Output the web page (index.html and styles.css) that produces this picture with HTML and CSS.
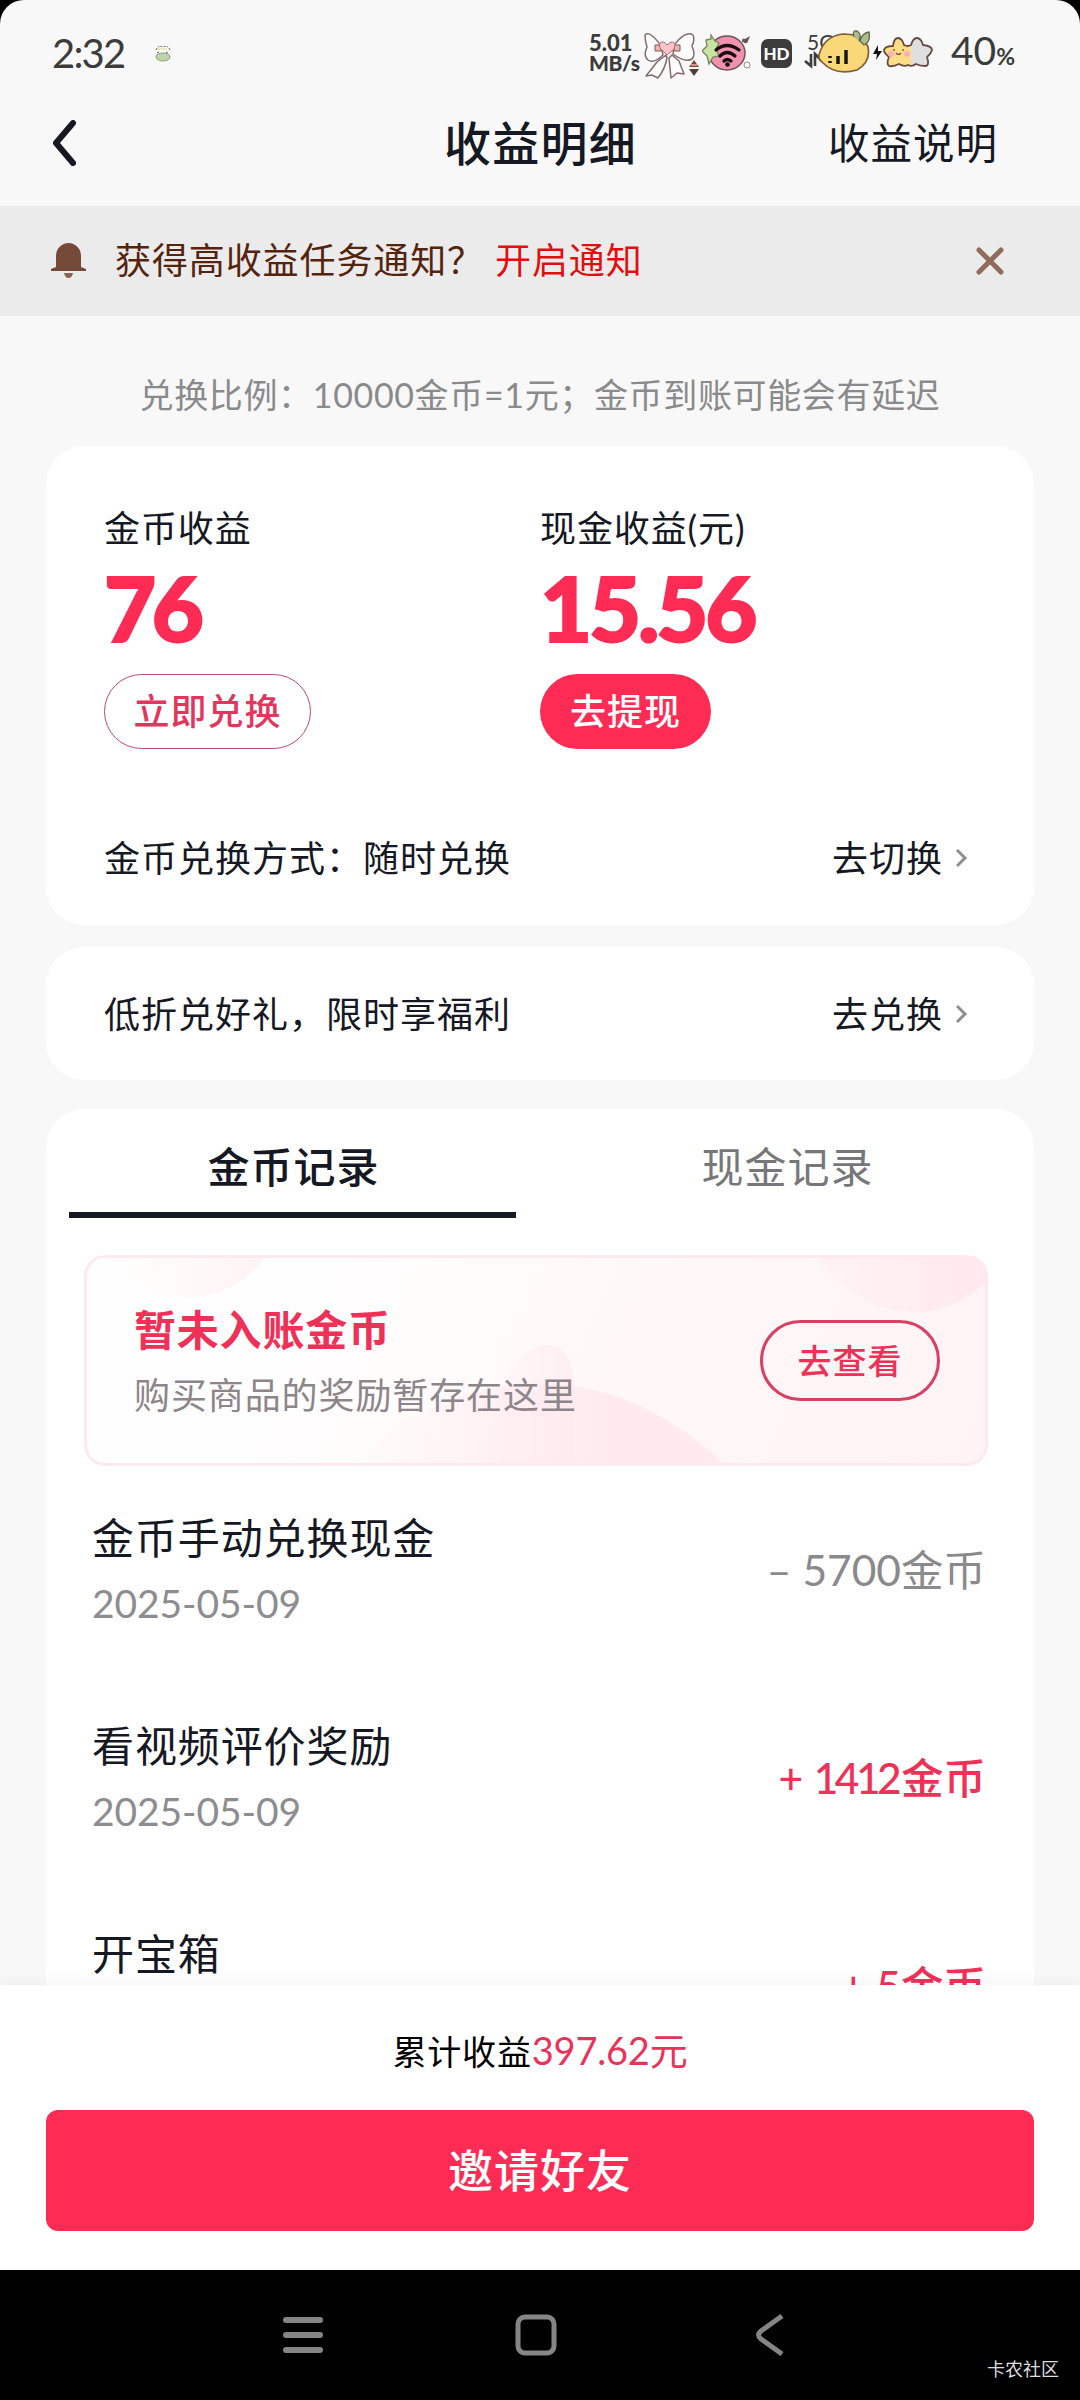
FILE: index.html
```html
<!DOCTYPE html>
<html lang="zh-CN">
<head>
<meta charset="utf-8">
<title>收益明细</title>
<link rel="stylesheet" href="styles.css">
</head>
<body>
<div class="phone">
  <div class="status">
    <span class="time">2:32</span>
    <svg class="frog" width="16" height="18" viewBox="0 0 16 18"><path d="M1 6Q3 1 8 3Q13 1 15 6" fill="#fff" stroke="#666c60" stroke-width="1" stroke-dasharray="2 1"/><path d="M3 5h9" stroke="#d5d982"/><ellipse cx="8" cy="13" rx="7" ry="4" fill="#bdd5a8" stroke="#78906b" stroke-width=".8"/><path d="M2 9l2-1M11 8l2 1" stroke="#57634f"/></svg>
    <span class="speed"><span>5.01</span><span class="unit">MB/s</span></span>
    <svg class="bow" width="56" height="48" viewBox="0 0 56 48">
      <g fill="#fdfdfd" stroke="#856c6b" stroke-width="1.5" stroke-linejoin="round"><path d="M23 24L14 31 3 45 9 44 15 47Q22 38 24 27zM26 27L28 47 34 42 41 43 36 30 29 24z"/><path d="M18 15Q7-1 2 4Q2 10 4 16Q0 25 5 29Q11 33 20 24zM31 14Q43-1 50 4Q52 9 49 15Q53 24 49 28Q42 32 30 23z"/></g>
      <path d="M12 14h6v6h-6zM31 14h6v6h-6z" fill="#f7b1ad" stroke="#795a58"/><path d="M24 24L17 17Q15 10 21 11L24 14 28 11Q34 11 31 18z" fill="#ffc4c9" stroke="#a86e6e"/>
      <path d="M46 36l5-7 5 7z" fill="#72483c"/><path d="M46 38l5 7 5-7z" fill="#563b38"/><path d="M48 34h6" stroke="#d79082" stroke-width="2"/>
    </svg>
    <svg class="berry" width="50" height="40" viewBox="0 0 50 40"><ellipse cx="25" cy="20" rx="18" ry="17" fill="#f291ad" stroke="#6e5458" stroke-width="1.5"/><path d="M9 2l4 6 4 2-3 6 3 7-6 1-4 7-2-8-5-5 5-5-1-6 5-1z" fill="#c5e5a0" stroke="#7c7f66" stroke-width="1.3"/><g fill="none" stroke="#180e12" stroke-width="3.2" stroke-linecap="round"><path d="M14 17Q25 8 37 17M18 23Q25 16 33 23M22 28Q25 25 29 28"/></g><circle cx="25.500" cy="31.500" r="2.300" fill="#180e12"/><path d="M40 9Q40 4 43 6L48 3 46 8Q45 12 41 9" fill="#645456"/><circle cx="45" cy="32" r="3" fill="#fff" stroke="#958681"/></svg>
    <span class="hd">HD</span>
    <span class="net">
      <span class="gen">5G</span>
      <svg width="66" height="46" viewBox="0 0 66 46"><path d="M1 31l6 5V24M11 36V24l6 6" fill="none" stroke="#3c3c3c" stroke-width="2.600"/><path d="M15 25Q20 6 39 4Q59 4 64 17Q67 32 53 40Q31 46 18 32Q14 29 15 25z" fill="#f9d977" stroke="#805d37" stroke-width="1.700"/><path d="M50 7Q48 0 53 1Q58 4 55 11M56 11Q58 3 65 2Q67 12 60 15z" fill="#aac08b" stroke="#69634b" stroke-width="1.300"/><path d="M26 26v2M26 31v2M34 26v8M42 20v14" stroke="#171510" stroke-width="3.500"/></svg>
    </span>
    <svg class="battery" width="62" height="34" viewBox="0 0 62 34"><path d="M6 9L1 18h4l-1 6 6-9H6z" fill="#111"/><path id="stars" d="M21 10Q22 2 26 2Q30 2 32 9Q36 11 39 9Q41 2 45 2Q49 2 51 9Q60 10 60 14Q59 18 55 21Q58 30 53 30Q48 30 44 28Q40 31 36 29Q32 31 27 28Q21 31 17 30Q14 28 17 21Q12 17 12 14Q13 10 21 10z" fill="#dfdfdf"/><path d="M21 10Q22 2 26 2Q30 2 32 9Q36 11 39 9V29Q32 31 27 28Q21 31 17 30Q14 28 17 21Q12 17 12 14Q13 10 21 10z" fill="#ffdc87"/><path d="M21 10Q22 2 26 2Q30 2 32 9Q36 11 39 9Q41 2 45 2Q49 2 51 9Q60 10 60 14Q59 18 55 21Q58 30 53 30Q48 30 44 28Q40 31 36 29Q32 31 27 28Q21 31 17 30Q14 28 17 21Q12 17 12 14Q13 10 21 10z" fill="none" stroke="#674940" stroke-width="1.800"/><path d="M22 13v2M31 13v2M24 17q2.500 3 5 0" fill="none" stroke="#765136" stroke-width="1.300"/><circle cx="19" cy="18" r="3" fill="#ffafb6"/><circle cx="35" cy="18" r="3" fill="#ffafb6"/></svg>
    <span class="level">40<small>%</small></span>
  </div>

  <header class="titlebar">
    <svg width="24" height="46" viewBox="0 0 24 46"><path d="M21 3L4 23 21 43" fill="none" stroke="#161823" stroke-width="6" stroke-linecap="round" stroke-linejoin="round"/></svg>
    <h1>收益明细</h1>
    <a class="help">收益说明</a>
  </header>

  <div class="notice">
    <svg width="38" height="38" viewBox="0 0 38 38"><path d="M6 25V14a12.500 13 0 0 1 25 0v11l5 2v2H1v-2z" fill="#754938"/><path d="M14 31h9q-1 5-4.500 5T14 31z" fill="#896454"/></svg>
    <span class="ask">获得高收益任务通知？</span>
    <a class="enable">开启通知</a>
    <svg class="close" width="28" height="28" viewBox="0 0 28 28"><path d="M3 3l22 22M25 3L3 25" stroke="#916b5c" stroke-width="5" stroke-linecap="round"/></svg>
  </div>

  <main>
    <p class="ratio">兑换比例：10000金币=1元；金币到账可能会有延迟</p>

    <section class="card balance">
      <div class="sums">
        <div class="sum"><span class="label">金币收益</span><strong>76</strong><button class="pill outline">立即兑换</button></div>
        <div class="sum"><span class="label">现金收益(元)</span><strong class="cash">15.56</strong><button class="pill solid">去提现</button></div>
      </div>
      <div class="line"><span>金币兑换方式：随时兑换</span><a>去切换</a><svg width="14" height="22" viewBox="0 0 14 22"><path d="M3 3l8 8-8 8" fill="none" stroke="#8f8f94" stroke-width="3"/></svg></div>
    </section>

    <section class="card gift">
      <div class="line"><span>低折兑好礼，限时享福利</span><a>去兑换</a><svg width="14" height="22" viewBox="0 0 14 22"><path d="M3 3l8 8-8 8" fill="none" stroke="#8f8f94" stroke-width="3"/></svg></div>
    </section>

    <section class="card records">
      <nav class="tabs"><a class="tab active">金币记录</a><a class="tab">现金记录</a></nav>
      <div class="pending">
        <svg class="deco" width="904" height="211" viewBox="0 0 904 211">
          <defs>
            <linearGradient id="a"><stop offset="0" stop-color="#fff5f6" stop-opacity="0"/><stop offset="1" stop-color="#fff2f4"/></linearGradient>
            <linearGradient id="b"><stop offset="0" stop-color="#fff3f5"/><stop offset="1" stop-color="#ffe8ee"/></linearGradient>
            <linearGradient id="c"><stop offset="0" stop-color="#ffeaf0" stop-opacity="0"/><stop offset=".7" stop-color="#feeaef"/><stop offset="1" stop-color="#feeaef"/></linearGradient>
            <linearGradient id="d"><stop offset="0" stop-color="#fff0f3" stop-opacity="0"/><stop offset="1" stop-color="#feeef2"/></linearGradient>
          </defs>
          <path d="M25 0Q54 43 100 43Q152 43 183 0z" fill="url(#a)"/>
          <path d="M730 0Q774 57 830 57Q872 57 904 25V0z" fill="url(#b)"/>
          <path d="M390 211Q420 90 464 90Q490 91 490 135V211z" fill="url(#d)"/>
          <path d="M270 211Q350 128 460 128Q560 132 642 211z" fill="url(#c)"/>
        </svg>
        <div class="words"><b>暂未入账金币</b><span>购买商品的奖励暂存在这里</span></div>
        <button class="view">去查看</button>
      </div>
      <ul class="list">
        <li><div><span class="name">金币手动兑换现金</span><time>2025-05-09</time></div><span class="amount spent">– 5700金币</span></li>
        <li><div><span class="name">看视频评价奖励</span><time>2025-05-09</time></div><span class="amount">+ <span class="ones">1412</span>金币</span></li>
        <li><div><span class="name">开宝箱</span><time>2025-05-09</time></div><span class="amount">+ 5金币</span></li>
      </ul>
    </section>
  </main>

  <footer class="invite">
    <p>累计收益<em>397.62元</em></p>
    <button>邀请好友</button>
  </footer>
</div>

<div class="navkeys">
  <svg width="42" height="42" viewBox="0 0 42 42"><path d="M4 6h34M4 21h34M4 36h34" stroke="#858585" stroke-width="6" stroke-linecap="round"/></svg>
  <svg width="42" height="42" viewBox="0 0 42 42"><rect x="3" y="3" width="36" height="36" rx="7" fill="none" stroke="#858585" stroke-width="5"/></svg>
  <svg width="42" height="42" viewBox="0 0 42 42"><path d="M34 2L13 17q-5 4 0 8L34 40" fill="none" stroke="#858585" stroke-width="5"/></svg>
  <span class="mark">卡农社区</span>
</div>
</body>
</html>
```
FILE: styles.css
```css
* { box-sizing: border-box; margin: 0; padding: 0; }

body {
  width: 1080px;
  height: 2400px;
  overflow: hidden;
  background: #000;
  color: #161823;
  font-family: Lato, "Noto Sans CJK SC", sans-serif;
}

button { font: inherit; background: none; border: 0; white-space: nowrap; }
svg { display: block; flex: none; }

.phone {
  display: flex;
  flex-direction: column;
  height: 2270px;
  overflow: hidden;
  background: #f8f8f8;
  border-radius: 24px 24px 0 0;
}

/* system status bar */
.status {
  display: flex;
  align-items: center;
  height: 106px;
  padding: 0 64px 0 52px;
  color: #3c3c3c;
}
.time { width: 103px; font-size: 40px; line-height: 104px; letter-spacing: -1.800px; }
.frog { margin-right: 418px; }
.speed {
  display: flex;
  flex-direction: column;
  width: 54px;
  font-size: 22px;
  font-weight: 900;
  line-height: 20px;
}
.unit { font-size: 21px; letter-spacing: -.4px; }
.bow { margin: 4px 3px 0 0; }
.berry { margin-right: 9px; }
.hd {
  width: 31px;
  height: 29px;
  border-radius: 7px;
  background: #3c3c3c;
  color: #fff;
  font-size: 17px;
  font-weight: 900;
  line-height: 29px;
  text-align: center;
}
.net { position: relative; margin: 0 2px 0 12px; }
.net svg { position: relative; }
.gen { position: absolute; left: 3px; top: 1px; font-size: 21px; line-height: 22px; }
.battery { margin: 0 17px 0 0; }
.level { font-size: 39px; line-height: 106px; white-space: nowrap; }
.level small { font-size: 23px; font-weight: 700; }

.titlebar {
  display: grid;
  grid-template-columns: 200px 1fr 200px;
  align-items: center;
  height: 100px;
  padding: 0 82px 27px 52px;
}
.titlebar h1 {
  padding-left: 31px;
  font-size: 47px;
  font-weight: 500;
  line-height: 60px;
  letter-spacing: 1.200px;
  text-align: center;
}
.help { font-size: 41.500px; line-height: 60px; letter-spacing: 1px; text-align: right; white-space: nowrap; }

.notice {
  display: flex;
  align-items: center;
  height: 110px;
  padding: 0 76px 0 50px;
  background: #ebebeb;
  font-size: 36px;
  line-height: 54px;
  letter-spacing: .9px;
}
.notice span, .notice a { padding-bottom: 2px; }
.ask { margin-left: 27px; color: #54240f; }
.enable { margin-left: 11px; color: #e01010; }
.close { margin-left: auto; }

/* scrolling content, cut off by the footer */
main { flex: 1; min-height: 0; overflow: hidden; padding: 0 46px; }
.ratio {
  height: 130px;
  padding-top: 49px;
  color: #8a8a8c;
  font-size: 34px;
  line-height: 60px;
  letter-spacing: .65px;
  text-align: center;
  white-space: nowrap;
}
.card { background: #fff; border-radius: 38px; }
.balance { height: 479px; padding-top: 55px; }
.sums { display: grid; grid-template-columns: 436px 1fr; padding-left: 58px; }
.sum { display: flex; flex-direction: column; align-items: flex-start; }
.label { height: 55px; font-size: 36px; line-height: 54px; letter-spacing: .9px; }
.sum strong {
  height: 118px;
  color: #fe2c55;
  font-size: 90px;
  font-weight: 900;
  line-height: 102px;
  letter-spacing: -4.500px;
  -webkit-text-stroke: 2px #fe2c55;
}
.sum .cash { letter-spacing: -3.200px; }
.pill {
  height: 75px;
  border-radius: 38px;
  font-size: 36px;
  font-weight: 500;
  line-height: 73px;
  letter-spacing: 1px;
  text-align: center;
}
.outline { border: 1px solid #b84c6c; color: #e3365c; width: 207px; }
.solid { background: #fe2c55; color: #fff; width: 171px; }
.line {
  display: flex;
  align-items: center;
  padding: 0 66px 0 58px;
  font-size: 36px;
  line-height: 54px;
  letter-spacing: 1px;
}
.line a { margin-left: auto; }
.line svg { margin-left: 11px; }
.balance .line { margin-top: 82px; }
.gift { height: 133px; margin-top: 22px; padding-top: 40px; }

.records { height: 1100px; margin-top: 29px; padding: 0 23px; }
.tabs { display: grid; grid-template-columns: 1fr 1fr; column-gap: 48px; }
.tab {
  height: 109px;
  border-bottom: 6px solid transparent;
  color: #77777a;
  font-size: 42px;
  line-height: 116px;
  letter-spacing: 1px;
  text-align: center;
}
.active { padding-left: 2px; color: #161823; border-color: #161823; font-weight: 500; }

.pending {
  position: relative;
  display: flex;
  justify-content: space-between;
  align-items: center;
  width: 904px;
  height: 211px;
  margin: 37px 0 0 15px;
  padding: 0 45px 0 47px;
  overflow: hidden;
  border: 3px solid #feeaee;
  border-radius: 21px;
  background: linear-gradient(115deg, #fffefe 25%, #fff7f8 60%, #fff3f5);
}
.deco { position: absolute; left: -3px; top: -3px; }
.words { position: relative; display: flex; flex-direction: column; padding-top: 5px; }
.words b { color: #ef3158; font-size: 42px; line-height: 65px; letter-spacing: .8px; }
.words span { color: #8d8589; font-size: 36px; line-height: 65px; letter-spacing: .9px; }
.view {
  position: relative;
  width: 180px;
  height: 81px;
  border: 3px solid #d84064;
  border-radius: 41px;
  color: #ef3158;
  font-size: 34px;
  font-weight: 500;
  line-height: 75px;
  letter-spacing: 1px;
}

.list { list-style: none; padding: 40px 5px 0 23px; }
.list li { display: flex; justify-content: space-between; width: 894px; height: 208px; }
.list li > div { display: flex; flex-direction: column; }
.name { font-size: 42px; line-height: 64px; letter-spacing: .9px; }
time { color: #8d8d8f; font-size: 39px; line-height: 67px; letter-spacing: -.1px; }
.amount { color: #ef3158; font-size: 42.500px; font-weight: 500; line-height: 128px; white-space: nowrap; }
.ones { letter-spacing: -3.600px; margin-right: 3px; }
.spent { color: #8a8a8d; font-weight: 400; }

.invite {
  position: relative;
  height: 285px;
  padding: 34px 46px 0;
  background: #fff;
  box-shadow: 0 -2px 14px rgba(0, 0, 0, .05);
}
.invite p { height: 91px; color: #000; font-size: 34px; line-height: 62px; letter-spacing: .8px; text-align: center; }
.invite em { color: #e8345a; font-size: 38px; font-style: normal; letter-spacing: -.2px; }
.invite button {
  width: 988px;
  height: 121px;
  border-radius: 12px;
  background: #fe2c55;
  color: #fff;
  font-size: 45px;
  font-weight: 500;
  line-height: 122px;
  letter-spacing: 1px;
}

.navkeys {
  position: relative;
  display: flex;
  gap: 191px;
  height: 130px;
  padding: 44px 0 0 282px;
}
.mark { position: absolute; right: 21px; top: 85px; color: #ddd; font-size: 18px; line-height: 28px; }
```
